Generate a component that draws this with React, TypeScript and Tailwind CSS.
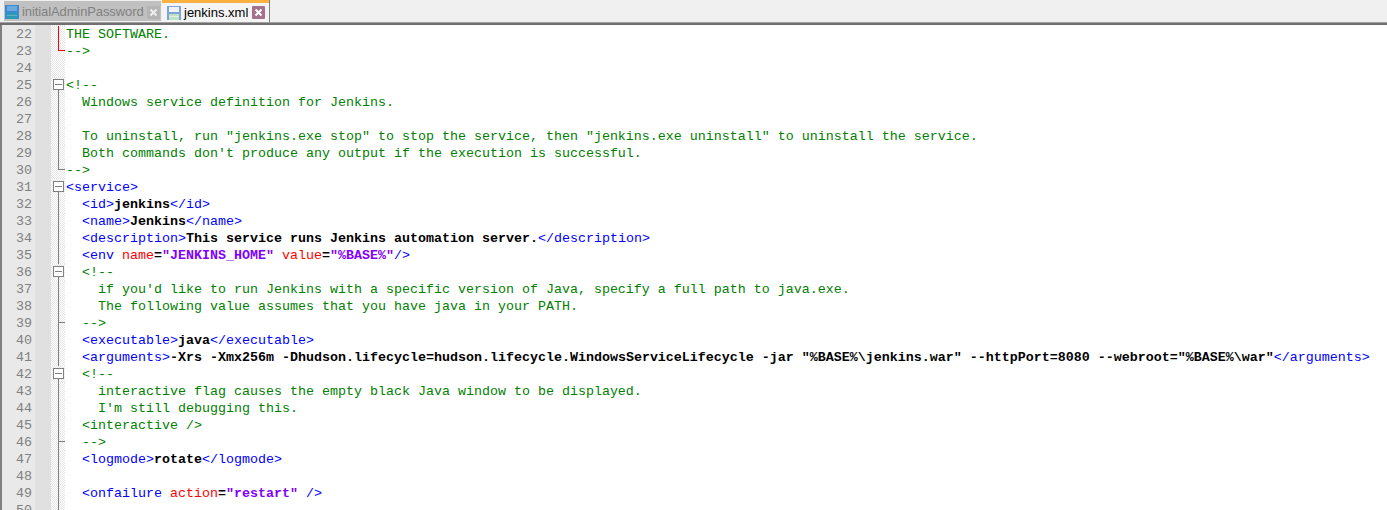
import React from "react";

type Seg = [string, string];
const G = "text-[#008000]";
const B = "text-[#0000ff]";
const K = "text-black font-bold";
const R = "text-[#ff0000]";
const P = "text-[#8000ff] font-bold";

type Fold = "none" | "line" | "box" | "end" | "redline" | "redend" | "tick";
type Row = { n: number; fold: Fold; segs: Seg[] };

const c = (s: string): Seg[] => [[s, G]];
const tag = (open: string, body: string, close: string): Seg[] => [
  [open, B],
  [body, K],
  [close, B],
];

const rows: Row[] = [
  { n: 22, fold: "redline", segs: c("THE SOFTWARE.") },
  { n: 23, fold: "redend", segs: c("-->") },
  { n: 24, fold: "none", segs: [] },
  { n: 25, fold: "box", segs: c("<!--") },
  { n: 26, fold: "line", segs: c("  Windows service definition for Jenkins.") },
  { n: 27, fold: "line", segs: [] },
  { n: 28, fold: "line", segs: c('  To uninstall, run "jenkins.exe stop" to stop the service, then "jenkins.exe uninstall" to uninstall the service.') },
  { n: 29, fold: "line", segs: c("  Both commands don't produce any output if the execution is successful.") },
  { n: 30, fold: "end", segs: c("-->") },
  { n: 31, fold: "box", segs: [["<service>", B]] },
  { n: 32, fold: "line", segs: tag("  <id>", "jenkins", "</id>") },
  { n: 33, fold: "line", segs: tag("  <name>", "Jenkins", "</name>") },
  { n: 34, fold: "line", segs: tag("  <description>", "This service runs Jenkins automation server.", "</description>") },
  {
    n: 35,
    fold: "line",
    segs: [
      ["  <env ", B],
      ["name", R],
      ["=", K],
      ['"JENKINS_HOME"', P],
      [" ", K],
      ["value", R],
      ["=", K],
      ['"%BASE%"', P],
      ["/>", B],
    ],
  },
  { n: 36, fold: "box", segs: c("  <!--") },
  { n: 37, fold: "line", segs: c("    if you'd like to run Jenkins with a specific version of Java, specify a full path to java.exe.") },
  { n: 38, fold: "line", segs: c("    The following value assumes that you have java in your PATH.") },
  { n: 39, fold: "tick", segs: c("  -->") },
  { n: 40, fold: "line", segs: tag("  <executable>", "java", "</executable>") },
  {
    n: 41,
    fold: "line",
    segs: tag(
      "  <arguments>",
      '-Xrs -Xmx256m -Dhudson.lifecycle=hudson.lifecycle.WindowsServiceLifecycle -jar "%BASE%\\jenkins.war" --httpPort=8080 --webroot="%BASE%\\war"',
      "</arguments>"
    ),
  },
  { n: 42, fold: "box", segs: c("  <!--") },
  { n: 43, fold: "line", segs: c("    interactive flag causes the empty black Java window to be displayed.") },
  { n: 44, fold: "line", segs: c("    I'm still debugging this.") },
  { n: 45, fold: "line", segs: c("  <interactive />") },
  { n: 46, fold: "tick", segs: c("  -->") },
  { n: 47, fold: "line", segs: tag("  <logmode>", "rotate", "</logmode>") },
  { n: 48, fold: "line", segs: [] },
  {
    n: 49,
    fold: "line",
    segs: [
      ["  <onfailure ", B],
      ["action", R],
      ["=", K],
      ['"restart"', P],
      [" />", B],
    ],
  },
  { n: 50, fold: "line", segs: [] },
];

function FoldMark({ fold }: { fold: Fold }) {
  if (fold === "none") return null;
  const color = fold.startsWith("red") ? "#ff0000" : "#808080";
  return (
    <svg width="14" height="17" viewBox="0 0 14 17" className="block" shapeRendering="crispEdges">
      {fold === "box" ? (
        <>
          <path d="M7.5 12V17" stroke={color} fill="none" />
          <rect x="2.5" y="2.5" width="10" height="10" fill="#fff" stroke={color} />
          <path d="M4 7.5H11" stroke={color} fill="none" />
        </>
      ) : fold === "end" || fold === "redend" ? (
        <path d="M7.5 0V7.5H14" stroke={color} fill="none" />
      ) : fold === "tick" ? (
        <path d="M7.5 0V17M7.5 7.5H14" stroke={color} fill="none" />
      ) : (
        <path d="M7.5 0V17" stroke={color} fill="none" />
      )}
    </svg>
  );
}

function SaveIcon({ dim }: { dim?: boolean }) {
  return (
    <svg width="14" height="14" viewBox="0 0 14 14" className="block shrink-0" shapeRendering="crispEdges">
      <rect x="0" y="0" width="14" height="14" fill={dim ? "#3c8ad2" : "#7fa3d8"} />
      <rect x="2" y="1" width="10" height="5" fill={dim ? "#6aaade" : "#eef2fa"} />
      <rect x="2" y="8" width="10" height="6" fill={dim ? "#2d9ab4" : "#bfe3c0"} />
      <rect x="2" y="10" width="10" height="1" fill={dim ? "#5fb4c4" : "#dff2df"} />
    </svg>
  );
}

function CloseIcon({ active }: { active?: boolean }) {
  return (
    <svg width="13" height="13" viewBox="0 0 13 13" className="block shrink-0">
      <rect x="0" y="0" width="13" height="13" rx="1" fill={active ? "#a5708c" : "#b4b4b4"} />
      <path d="M3.5 3.5L9.5 9.5M9.5 3.5L3.5 9.5" stroke={active ? "#ffffff" : "#eeeeee"} strokeWidth="2" />
    </svg>
  );
}

export default function App() {
  const mono = "font-['Liberation_Mono',monospace] text-[13.33px] leading-[17px]";
  return (
    <div className="w-[1387px] h-[510px] overflow-hidden bg-white flex flex-col font-['Liberation_Mono',monospace]">
      <div className="h-[22px] shrink-0 bg-[#f0f0f0] flex items-start font-['Liberation_Sans',sans-serif] text-[13px]">
        <div className="w-[157px] h-[20px] mt-px ml-[4px] bg-[#c0c0c0] flex items-center pl-[1px] pt-[2px] gap-[3px] text-[#808080]">
          <SaveIcon dim />
          <span className="whitespace-nowrap w-[122px] tracking-[-0.1px]">initialAdminPassword</span>
          <CloseIcon />
        </div>
        <div className="w-[108px] h-[22px] ml-px bg-[#f4f4f4] border-r border-[#7f7f7f] flex flex-col text-black">
          <div className="h-[3px] bg-[#fbb040] shrink-0" />
          <div className="flex items-center pl-[5px] gap-[3px] flex-1">
            <SaveIcon />
            <span className="whitespace-nowrap w-[65px]">jenkins.xml</span>
            <CloseIcon active />
          </div>
        </div>
      </div>
      <div className="h-px shrink-0 bg-[#a0a0a0]" />
      <div className="h-[2px] shrink-0 bg-[#6f6f6f]" />
      <div className={`flex-1 min-h-0 flex flex-col overflow-hidden border-l-2 border-[#808080] ${mono}`}>
        <div className="h-px shrink-0 flex">
          <div className="w-[33px] bg-[#e9e9e9]" />
          <div className="w-[16px] bg-[#e0e0e0]" />
          <div className="w-[14px] bg-[repeating-conic-gradient(#e6e6e6_0%_25%,#ffffff_0%_50%)] bg-[length:2px_2px]" />
        </div>
        {rows.map((r) => (
          <div key={r.n} className="h-[17px] shrink-0 flex">
            <div className="w-[33px] shrink-0 bg-[#e9e9e9] text-[#808080] pl-[14px]">{r.n}</div>
            <div className="w-[16px] shrink-0 bg-[#e0e0e0]" />
            <div className="w-[14px] shrink-0 bg-[repeating-conic-gradient(#e6e6e6_0%_25%,#ffffff_0%_50%)] bg-[length:2px_2px]">
              <FoldMark fold={r.fold} />
            </div>
            <pre className={`pl-px whitespace-pre ${mono}`}>
              {r.segs.map((s, i) => (
                <span key={i} className={s[1]}>
                  {s[0]}
                </span>
              ))}
            </pre>
          </div>
        ))}
      </div>
    </div>
  );
}
